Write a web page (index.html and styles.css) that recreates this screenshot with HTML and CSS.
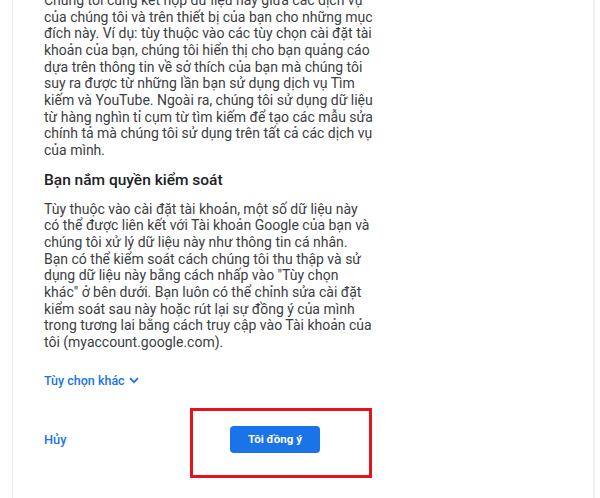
FILE: index.html
```html
<!DOCTYPE html>
<html lang="vi">
<head>
    <meta charset="UTF-8">
    <meta name="viewport" content="width=device-width, initial-scale=1.0">
    <title>Tôi đồng ý</title>
    <link rel="stylesheet" href="styles.css">
</head>
<body>
    <div class="card">
        <div class="content">
            <p class="text first">Chúng tôi cũng kết hợp dữ liệu này giữa các dịch vụ<br>
                của chúng tôi và trên thiết bị của bạn cho những mục<br>
                đích này. Ví dụ: tùy thuộc vào các tùy chọn cài đặt tài<br>
                khoản của bạn, chúng tôi hiển thị cho bạn quảng cáo<br>
                dựa trên thông tin về sở thích của bạn mà chúng tôi<br>
                suy ra được từ những lần bạn sử dụng dịch vụ Tìm<br>
                kiếm và YouTube. Ngoài ra, chúng tôi sử dụng dữ liệu<br>
                từ hàng nghìn tỉ cụm từ tìm kiếm để tạo các mẫu sửa<br>
                chính tả mà chúng tôi sử dụng trên tất cả các dịch vụ<br>
                của mình.</p>

            <h2 class="title">Bạn nắm quyền kiểm soát</h2>

            <p class="text">Tùy thuộc vào cài đặt tài khoản, một số dữ liệu này<br>
                có thể được liên kết với Tài khoản Google của bạn và<br>
                chúng tôi xử lý dữ liệu này như thông tin cá nhân.<br>
                Bạn có thể kiểm soát cách chúng tôi thu thập và sử<br>
                dụng dữ liệu này bằng cách nhấp vào "Tùy chọn<br>
                khác" ở bên dưới. Bạn luôn có thể chỉnh sửa cài đặt<br>
                kiểm soát sau này hoặc rút lại sự đồng ý của mình<br>
                trong tương lai bằng cách truy cập vào Tài khoản của<br>
                tôi (myaccount.google.com).</p>

            <a class="more" href="#">Tùy chọn khác
                <svg width="10" height="7" viewBox="0 0 10 7"><path d="M1 1.2 L5 5.2 L9 1.2" fill="none" stroke="#1a73e8" stroke-width="1.7"/></svg>
            </a>

            <div class="actions">
                <a class="cancel" href="#">Hủy</a>
                <button class="agree">Tôi đồng ý</button>
            </div>
        </div>
        <!-- red annotation around the agree button -->
        <div class="highlight"></div>
    </div>
</body>
</html>
```

FILE: styles.css
```css
* {
    box-sizing: border-box;
}

body {
    margin: 0;
    background: #fff;
    font-family: Roboto, "Liberation Sans", sans-serif;
    overflow: hidden;
}

.card {
    display: flow-root;
    position: relative;
    margin: 0 5px 0 12px;
    height: 498px;
    border-left: 1px solid #ececec;
    border-right: 2px solid #efefef;
}

.content {
    padding-left: 31px;
    margin-top: -8px;
}

.text {
    margin: 0;
    font-size: 14px;
    line-height: 16.67px;
    color: #3c4043;
    white-space: nowrap;
}

.title {
    margin: 11px 0 11px;
    font-size: 15.5px;
    line-height: 20px;
    font-weight: 500;
    color: #202124;
}

.more {
    display: inline-flex;
    align-items: center;
    gap: 4px;
    margin-top: 20px;
    font-size: 12.5px;
    line-height: 20px;
    font-weight: 500;
    color: #1a73e8;
    text-decoration: none;
}

.actions {
    display: flex;
    justify-content: space-between;
    align-items: center;
    margin-top: 35px;
    width: 276px;
}

.cancel {
    font-size: 12.8px;
    font-weight: 500;
    color: #1a73e8;
    text-decoration: none;
}

.agree {
    width: 90px;
    height: 27px;
    border: none;
    border-radius: 4px;
    background: #1a73e8;
    color: #fff;
    font-family: Roboto, "Liberation Sans", sans-serif;
    font-size: 11.5px;
    font-weight: 700;
}

.highlight {
    position: absolute;
    left: 177px;
    top: 408px;
    width: 182px;
    height: 70px;
    border: 3px solid #e3141d;
}
```
